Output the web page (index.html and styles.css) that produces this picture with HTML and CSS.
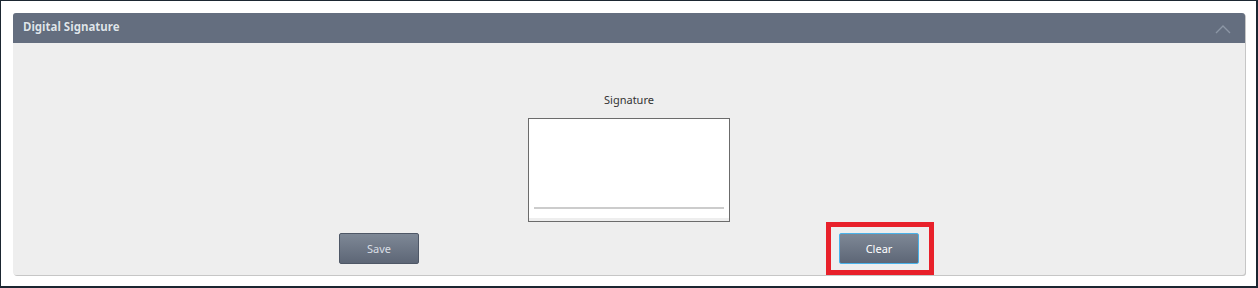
FILE: index.html
```html
<!DOCTYPE html>
<html lang="en">
<head>
    <meta charset="UTF-8">
    <title>Digital Signature</title>
    <link rel="stylesheet" href="styles.css">
</head>
<body>
    <div class="panel">
        <div class="panel-header">
            <span class="panel-title">Digital Signature</span>
            <svg class="chevron" width="16" height="10" viewBox="0 0 16 10">
                <polyline points="1,9 8,2 15,9" fill="none" stroke="#8c96a5" stroke-width="1.4"/>
            </svg>
        </div>
        <div class="panel-body">
            <div class="sig-label">Signature</div>
            <div class="sig-box">
                <div class="sig-canvas">
                    <div class="sig-line"></div>
                </div>
            </div>
            <div class="actions">
                <div class="action">
                    <button class="btn">Save</button>
                </div>
                <div class="action">
                    <span class="highlight">
                        <button class="btn btn-focus">Clear</button>
                    </span>
                </div>
            </div>
        </div>
    </div>
</body>
</html>
```

FILE: styles.css
```css
* {
    margin: 0;
    padding: 0;
    box-sizing: border-box;
}

html, body {
    height: 100%;
}

body {
    font-family: 'Noto Sans', 'Open Sans', sans-serif;
    background-color: #ffffff;
    border-top: 1px solid #1b2631;
    border-left: 1px solid #1b2631;
    border-right: 2px solid #1b2631;
    border-bottom: 2px solid #1b2631;
    padding: 12px 10px 0 12px;
    color: #333;
}

.panel {
    background: #eeeeee;
    border-radius: 3px;
    box-shadow: 1px 1px 0 #c6c6c6;
    width: 1232px;
}

.panel-header {
    height: 30px;
    background-color: #646e7f;
    border-radius: 3px 3px 0 0;
    display: flex;
    align-items: center;
    justify-content: space-between;
    padding: 0 14px 0 10px;
}

.panel-title {
    color: #dfe4ea;
    font-size: 11.5px;
    font-weight: bold;
    text-shadow: 0 0 1px rgba(0, 0, 0, 0.25);
    margin-top: -3px;
}

.chevron {
    margin-top: 1px;
}

.panel-body {
    height: 232px;
    padding-top: 49px;
    display: flex;
    flex-direction: column;
    align-items: center;
}

.sig-label {
    font-size: 11px;
    line-height: 16px;
    color: #333;
    margin-bottom: 10px;
}

.sig-box {
    width: 202px;
    height: 104px;
    border: 1px solid #6b6b6b;
    background: #eeeeee;
}

.sig-canvas {
    height: 99px;
    background: #ffffff;
    padding: 0 5px;
}

.sig-line {
    position: relative;
    top: 88px;
    height: 2px;
    background: #cccccc;
}

.actions {
    width: 1000px;
    margin-top: 11px;
    display: grid;
    grid-template-columns: 1fr 1fr;
}

.action {
    display: flex;
    justify-content: center;
}

.btn {
    width: 80px;
    height: 31px;
    border: 1px solid #4e5766;
    border-radius: 2px;
    background: linear-gradient(#7e8896, #5d6676);
    color: #d9dee4;
    font-family: 'Noto Sans', 'Open Sans', sans-serif;
    font-size: 11px;
}

.btn-focus {
    border-color: #49b2ea;
    color: #ffffff;
}

.highlight {
    position: relative;
    display: inline-block;
    line-height: 0;
}

.highlight::after {
    content: "";
    position: absolute;
    top: -11px;
    left: -13px;
    right: -15px;
    bottom: -11px;
    border: 5px solid #e8202a;
}
```
